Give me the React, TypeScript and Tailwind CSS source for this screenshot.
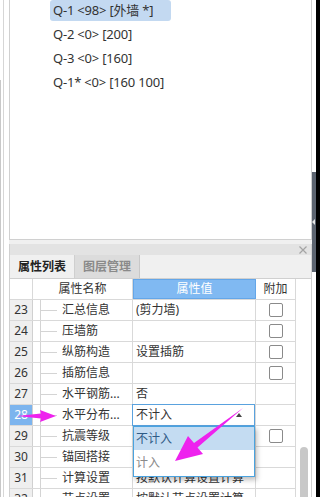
const font = { fontFamily: '"Noto Sans", "Noto Sans CJK SC", sans-serif' };

const listItems = ["Q-1 <98> [外墙 *]", "Q-2 <0> [200]", "Q-3 <0> [160]", "Q-1* <0> [160 100]"];

const rows = [
  { n: 23, name: "汇总信息", value: "(剪力墙)", check: true },
  { n: 24, name: "压墙筋", value: "", check: true },
  { n: 25, name: "纵筋构造", value: "设置插筋", check: true },
  { n: 26, name: "插筋信息", value: "", check: true },
  { n: 27, name: "水平钢筋...", value: "否", check: false },
  { n: 28, name: "水平分布...", value: "不计入", check: false, active: true },
  { n: 29, name: "抗震等级", value: "", check: true },
  { n: 30, name: "锚固搭接", value: "", check: false },
  { n: 31, name: "计算设置", value: "按默认计算设置计算", check: false },
  { n: 32, name: "节点设置", value: "按默认节点设置计算", check: false },
];

function Combo() {
  return (
    <>
      <div className="absolute -top-px -left-px w-[123px] h-[22px] border border-[#5aa2de] bg-white flex items-center justify-between pl-[3px] pr-[12px] z-10">
        <span>不计入</span>
        <svg width="6" height="4" viewBox="0 0 6 4">
          <path d="M0 4 L3 0 L6 4 Z" fill="#444" />
        </svg>
      </div>
      <div className="absolute top-[21px] left-0 w-[122px] h-[51px] border border-[#4aa3df] bg-white shadow-[2px_3px_5px_rgba(0,0,0,0.25)] z-10 flex flex-col">
        <div className="h-[23px] bg-[#c4dcf2] text-[#2f5b86] flex items-center pl-[2px]">不计入</div>
        <div className="flex-1 text-[#8a8a8a] flex items-center pl-[2px]">计入</div>
      </div>
    </>
  );
}

function Row({ r }: { r: (typeof rows)[number] }) {
  return (
    <div className="flex h-[21px] shrink-0 border-b border-[#d9d9d9]">
      <div
        className={`w-[23px] border-r border-[#d0d0d0] flex items-center justify-center ${
          r.active ? "bg-[#7cb4ee] text-white" : "bg-[#efefef] text-[#333]"
        }`}
      >
        {r.n}
      </div>
      <div className="w-[100px] border-r border-[#d9d9d9] flex items-center pl-[7px] text-[#333]">
        <div className="w-[17px] self-stretch border-l border-[#d4d4d4] flex items-center">
          <div className="w-[16px] h-px bg-[#d4d4d4]" />
        </div>
        <span className="ml-[5px] whitespace-nowrap">{r.name}</span>
      </div>
      <div className="relative w-[123px] border-r border-[#d9d9d9] flex items-center pl-[3px] text-[#333] whitespace-nowrap">
        {r.active ? <Combo /> : r.value}
      </div>
      <div className="w-[40px] border-r border-[#d9d9d9] flex items-center justify-center">
        {r.check && <div className="w-[14px] h-[14px] rounded-[2px] border border-[#8a8a8a] bg-white" />}
      </div>
    </div>
  );
}

export default function App() {
  return (
    <div className="relative w-[320px] h-[497px] overflow-hidden bg-white flex text-[12px]" style={font}>
      {/* left gutter */}
      <div className="w-[3px] flex flex-col">
        <div className="h-[80px]" />
        <div className="flex-1 border-l border-[#c8c8c8]" />
      </div>
      <div className="w-px bg-[#d6d6d6]" />
      <div className="w-[5px]" />

      {/* main column */}
      <div className="w-[303px] flex flex-col bg-[#f0f0f0]">
        <div className="h-[240px] shrink-0 bg-white border-l border-r border-b border-[#d0d0d0] pl-[40px] flex flex-col gap-[3px] text-[13px] text-[#333]">
          {listItems.map((t, i) => (
            <div
              key={t}
              className={`h-[21px] w-[121px] flex items-center pl-[3px] whitespace-nowrap rounded-[3px] tracking-[-0.2px] ${
                i === 0 ? "bg-[#c3d9f1]" : ""
              }`}
            >
              {t}
            </div>
          ))}
        </div>
        <div className="h-[4px] shrink-0" />
        <div className="flex-1 flex flex-col border-l border-r border-[#d0d0d0] min-h-0">
          <div className="h-[11px] shrink-0 bg-[#e3e3e3] flex items-center justify-end pr-[4px]">
            <svg width="8" height="8" viewBox="0 0 8 8">
              <path d="M0.5 0.5 L7.5 7.5 M7.5 0.5 L0.5 7.5" stroke="#a4a4a4" strokeWidth="1.2" />
            </svg>
          </div>
          <div className="h-[23px] shrink-0 flex bg-[#f0f0f0] font-bold">
            <div className="w-[65px] flex items-center justify-center text-[#222] border-r border-[#cfcfcf]">属性列表</div>
            <div className="w-[65px] flex items-center justify-center text-[#8a8a8a] bg-[#dcdcdc] border-r border-[#c8c8c8]">图层管理</div>
          </div>
          <div className="flex-1 flex bg-white border-t border-[#d0d0d0] min-h-0 overflow-hidden">
            <div className="w-[286px] flex flex-col">
              <div className="flex h-[21px] border-b border-[#d9d9d9] shrink-0">
                <div className="w-[23px] border-r border-[#d9d9d9]" />
                <div className="w-[100px] border-r border-[#d9d9d9] flex items-center justify-center text-[#333]">属性名称</div>
                <div className="w-[123px] bg-[#80b9f2] border border-[#64a6e8] flex items-center justify-center text-white">属性值</div>
                <div className="w-[40px] border-r border-[#d9d9d9] flex items-center justify-center text-[#333]">附加</div>
              </div>
              {rows.map((r) => (
                <Row key={r.n} r={r} />
              ))}
            </div>
            <div className="flex-1 flex flex-col items-center">
              <div className="h-[168px] shrink-0" />
              <div className="w-[8px] h-[60px] shrink-0 rounded-t-[4px] bg-[#c8c8c8] ml-[1px]" />
            </div>
          </div>
        </div>
      </div>

      {/* right edge */}
      <div className="w-[4px] flex flex-col">
        <div className="h-[172px]" />
        <div className="h-[100px] bg-[#5c6470] flex items-center justify-start">
          <svg width="3" height="6" viewBox="0 0 3 6">
            <path d="M3 0 L0 3 L3 6 Z" fill="#e6e6e6" />
          </svg>
        </div>
      </div>
      <div className="w-[4px] bg-black" />

      {/* annotation arrows */}
      <svg className="absolute inset-0 z-20 pointer-events-none" width="320" height="497" viewBox="0 0 320 497">
        <polygon points="17,416 41,413.6 40,410 56,416 40,422 41,418.4" fill="#ee22ee" />
        <polygon points="243,408 197.5,447.5 203,454 175,461 188,436 194,443" fill="#ee22ee" />
      </svg>
    </div>
  );
}
